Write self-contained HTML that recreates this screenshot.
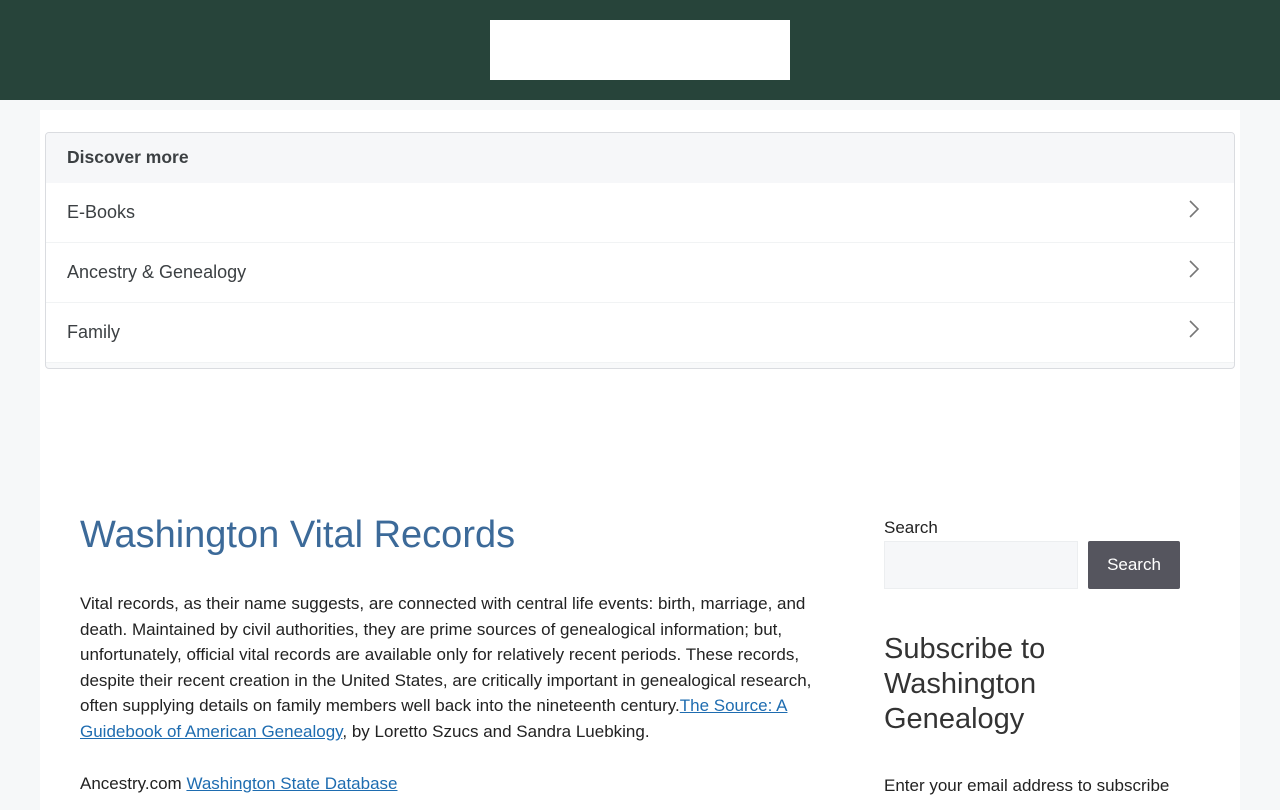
<!DOCTYPE html>
<html><head><meta charset="utf-8"><style>
*{box-sizing:border-box;margin:0;padding:0}
body{width:1280px;height:800px;overflow:hidden;background:#f6f8f9;font-family:"Liberation Sans",sans-serif;color:#222}
.hdr{height:100px;background:#27443a;position:relative}
.logo{position:absolute;left:490px;top:20px;width:300px;height:60px;background:#fff}
.wrap{position:absolute;left:40px;top:110px;width:1200px;height:700px;background:#fff}
.dm{position:absolute;left:5px;top:22px;width:1190px;height:237px;border:1px solid #dadce0;border-radius:4px;overflow:hidden;background:#f8f9fa}
.dm .h{height:50px;line-height:48px;padding-left:21px;font-weight:bold;font-size:17.5px;color:#3c4043;background:#f6f7f9}
.dm .r{height:60px;line-height:58px;padding-left:21px;font-size:18px;color:#3c4043;background:#fff;border-bottom:1px solid #f1f3f4;position:relative}
.dm .r svg{position:absolute;right:34px;top:17px}
h1{position:absolute;left:40px;top:404px;font-weight:normal;font-size:38px;color:#3c6a99}
.p{position:absolute;left:40px;top:481px;width:736px;font-size:17px;line-height:25.6px;color:#222}
a{color:#1e6cb0;text-decoration:underline}
.side{position:absolute;left:844px;top:408px;width:300px;color:#222}
.inp{position:absolute;left:0;top:23px;width:194px;height:48px;background:#f6f7f9;border:1px solid #eceef0}
.btn{position:absolute;left:204px;top:23px;width:92px;height:48px;background:#55555e;color:#fff;border-radius:2px;text-align:center;line-height:48px;font-size:17px}
.sub{position:absolute;left:0;top:114px;font-size:29px;line-height:35px;color:#333}
.em{position:absolute;left:0;top:258px;font-size:17px;white-space:nowrap}
</style></head><body>
<div class="hdr"><div class="logo"></div></div>
<div class="wrap">
<div class="dm">
<div class="h">Discover more</div>
<div class="r">E-Books<svg width="12" height="18" viewBox="0 0 12 18"><path d="M2 1l8 8-8 8" fill="none" stroke="#777" stroke-width="1.6"/></svg></div>
<div class="r">Ancestry &amp; Genealogy<svg width="12" height="18" viewBox="0 0 12 18"><path d="M2 1l8 8-8 8" fill="none" stroke="#777" stroke-width="1.6"/></svg></div>
<div class="r">Family<svg width="12" height="18" viewBox="0 0 12 18"><path d="M2 1l8 8-8 8" fill="none" stroke="#777" stroke-width="1.6"/></svg></div>
</div>
<h1>Washington Vital Records</h1>
<div class="p"><p>Vital records, as their name suggests, are connected with central life events: birth, marriage, and death. Maintained by civil authorities, they are prime sources of genealogical information; but, unfortunately, official vital records are available only for relatively recent periods. These records, despite their recent creation in the United States, are critically important in genealogical research, often supplying details on family members well back into the nineteenth century.<a>The Source: A Guidebook of American Genealogy</a>, by Loretto Szucs and Sandra Luebking.</p>
<p style="margin-top:26px">Ancestry.com <a>Washington State Database</a></p></div>
<div class="side">
<div style="font-size:17px">Search</div>
<div class="inp"></div><div class="btn">Search</div>
<div class="sub">Subscribe to<br>Washington<br>Genealogy</div>
<div class="em">Enter your email address to subscribe</div>
</div>
</div>
</body></html>
